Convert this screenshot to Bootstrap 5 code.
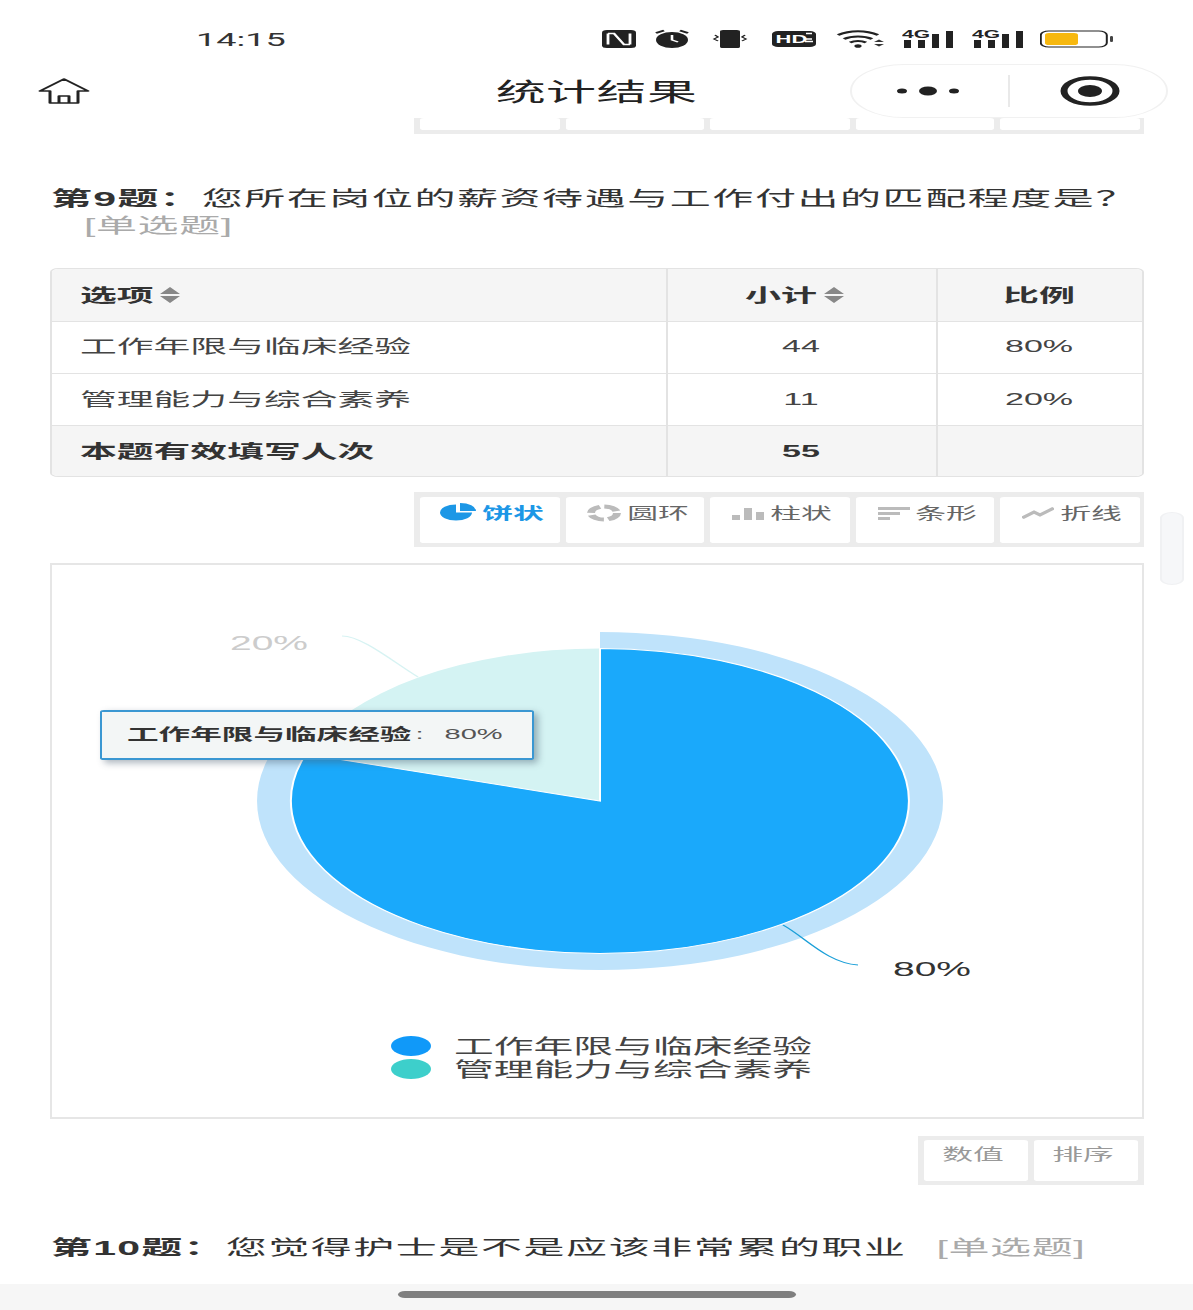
<!doctype html>
<html lang="zh-CN">
<head>
<meta charset="utf-8">
<title>统计结果</title>
<link href="https://cdn.jsdelivr.net/npm/bootstrap@5.3.0/dist/css/bootstrap.min.css" rel="stylesheet">
<style>
html,body{background:#fff;overflow:hidden;height:1310px}
body{font-family:"Liberation Sans","Noto Sans CJK SC",sans-serif;color:#333}
.stage{width:596.5px;height:1310px;transform:scaleX(2);transform-origin:0 0;background:#fff;position:relative}
.statusbar{height:64px;padding:14px 0 0 98px}
.clock{font:400 18px Roboto,sans-serif;color:#333;width:202.5px;padding-top:1px}
.nav-row{height:54px;display:grid;grid-template-columns:1fr auto 1fr;align-items:center}
.page-title{font-size:25px;color:#222;letter-spacing:.2px;padding-top:3px}
.capsule{width:159px;height:54px;border:1px solid #f1f1f1;border-radius:27px;margin-right:12.5px}
.capsule-half{height:100%}
.capsule-left{width:79px;padding-right:1px}
.capsule-right{width:79px;padding-left:3px}
.capsule-sep{width:.5px;height:32px;background:#e9e9e9}
.sheet{height:1166px;overflow:hidden;padding:0 25px}
.stub{height:16px}
.tabbar{background:#ececec;padding:5px 2px 4px 3px;gap:3px}
.tabbar.stub{padding-top:0}
.tab-cell{width:69.5px;height:46px;background:#fff;border-radius:2px;font-size:15.4px;color:#666;padding:6px 0 0 2.5px;gap:3px;line-height:22px}
.stub .tab-cell{height:12px;padding:0}
.tab-cell.on{color:#1c97e6;font-weight:700}
.q-title{font-size:20.5px;line-height:27px;letter-spacing:.78px;color:#333;margin:50.5px 0 29.5px;padding-left:17px;text-indent:-16.5px}
.q-title b{letter-spacing:.6px}
.q-kind{color:#aaa;letter-spacing:.3px}
.q-next{margin:48.5px 0 0;padding-left:.5px;text-indent:0;white-space:nowrap}
.q-next .q-kind{margin-left:2px}
.grid-wrap{border-radius:4px;overflow:hidden;border:1px solid #e3e3e3;height:209px}
.stats{--bs-table-border-color:#e3e3e3;--bs-table-color:#444;font-size:18.4px;table-layout:fixed;height:209px;margin:0;border-style:hidden}
.stats th,.stats td{padding:0 14px;height:52px;vertical-align:middle}
.stats th{padding-top:3px}
.stats th,.stats .sum td{color:#333;font-weight:700}
.stats .shade{--bs-table-bg:#f5f5f5}
.stats .num{font-size:17px;text-align:center}
.stats th.num{font-size:18px}
.stats th.sortable{padding-right:21px}
.sort{margin-left:3px;vertical-align:-2px}
.plot{height:556px;border-style:solid;border-color:#e6e6e6;border-width:2px 1px;margin-top:16px;position:relative}
.plot svg{display:block}
.tip{position:absolute;left:24px;top:145px;width:216.5px;height:50px;background:#f3f6f6;border:solid #3a97d2;border-width:2px 1px;border-radius:2px;box-shadow:2px 3px 5px rgba(70,90,110,.45);padding-left:12.5px;font-size:15.8px;color:#333;font-weight:700}
.tip span{font-weight:400;font-size:14.5px;color:#555;margin-left:2px}
.tip .tip-val{margin-left:2.5px}
.tools{margin-top:17px}
.tools .tabbar{padding:4px 3px;gap:3px}
.tools .tab-cell{width:52px;height:41px;color:#999;padding:4px 2px 0 0}
.chart-num{font-size:19.5px}
.chart-leg{font-size:19.9px;fill:#444}
.scroll-thumb{position:absolute;left:580px;top:512px;width:12px;height:73px;border-radius:6px;background:#f6f7f9;border:1px solid #f0f1f3}
.homebar{height:26px;background:#f6f6f6;padding-top:7px}
.home-ind{width:198.5px;height:7px;border-radius:4px;background:#7f7f7f}
</style>
</head>
<body>
<div class="stage">
  <div class="statusbar d-flex align-items-center">
    <div class="clock">14:15</div>
    <div class="d-flex align-items-center">
      <svg width="17" height="18" viewBox="0 0 17 18"><rect width="17" height="18" rx="2.5" fill="#222"/><path d="M3 3.500v11M14 3.500v11M3 3.500h3l5 11h3" fill="none" stroke="#fff" stroke-width="1.400"/></svg>
      <svg style="margin-left:9.5px" width="18" height="20" viewBox="0 0 18 20"><circle cx="9" cy="11" r="8" fill="#222"/><path d="M9 6v5l3 2" fill="none" stroke="#fff" stroke-width="1.300"/><path d="M1 4l4-2.500M17 4l-4-2.500" stroke="#222" stroke-width="1.600"/></svg>
      <svg style="margin-left:10px" width="20" height="20" viewBox="0 0 20 20"><rect x="5" y="1" width="10" height="18" rx="1.500" fill="#222"/><path d="M2.500 6l1.500 2-2 2 2 2M17.500 6l-1.500 2 2 2-2 2" fill="none" stroke="#222" stroke-width="1"/></svg>
      <svg style="margin-left:11px" width="22" height="18" viewBox="0 0 22 18"><rect width="22" height="16" y="1" rx="3" fill="#222"/><text x="1.800" y="13" font-size="11" font-weight="700" fill="#fff" font-family="Liberation Sans">HD</text><path d="M17 3.500h3M17 9h3M16.500 11.500h4" stroke="#fff" stroke-width="1.400"/></svg>
      <svg style="margin-left:10px" width="24" height="20" viewBox="0 0 24 20"><path d="M1 6c6-5 14-5 20 0M4 10c4-3.500 10-3.500 14 0M7 13.500c2.500-2 5.500-2 8 0" fill="none" stroke="#222" stroke-width="2"/><circle cx="11" cy="17" r="1.800" fill="#222"/><path d="M19 13l2.500-2.500 2.500 2.500zM19 15l2.500 2.500 2.500-2.500z" fill="#333"/></svg>
      <svg style="margin-left:8.5px" width="26" height="20" viewBox="0 0 26 20"><text x="0" y="9" font-size="10.500" font-weight="700" fill="#222" font-family="Liberation Sans">4G</text><rect x="1" y="11" width="3.500" height="8" fill="#222"/><rect x="8" y="11" width="3.500" height="8" fill="#222"/><rect x="15" y="5" width="3.500" height="14" fill="#222"/><rect x="22" y="2" width="3.500" height="17" fill="#222"/></svg>
      <svg style="margin-left:9px" width="26" height="20" viewBox="0 0 26 20"><text x="0" y="9" font-size="10.500" font-weight="700" fill="#222" font-family="Liberation Sans">4G</text><rect x="1" y="11" width="3.500" height="8" fill="#222"/><rect x="8" y="11" width="3.500" height="8" fill="#222"/><rect x="15" y="5" width="3.500" height="14" fill="#222"/><rect x="22" y="2" width="3.500" height="17" fill="#222"/></svg>
      <svg style="margin-left:8.5px" width="37" height="20" viewBox="0 0 37 20"><rect x=".4" y="2" width="33" height="16" rx="4" fill="#fff" stroke="#222" stroke-width="1"/><rect x="2.500" y="4" width="16.500" height="12" rx="2" fill="#f7b80f"/><rect x="35" y="7" width="1.500" height="6" rx=".7" fill="#444"/></svg>
    </div>
  </div>

  <div class="nav-row">
    <svg style="margin-left:19px" width="26" height="28" viewBox="0 0 26 28"><path d="M13 2 1 14h5v12h14V14h5zM10.500 26v-7h5v7" fill="none" stroke="#222" stroke-width="1.500" stroke-linejoin="round"/></svg>
    <div class="page-title">统计结果</div>
    <div class="capsule d-flex align-items-center ms-auto">
      <div class="capsule-half capsule-left d-flex align-items-center justify-content-center">
        <svg width="33" height="12" viewBox="0 0 33 12"><circle cx="3" cy="6" r="2.500" fill="#222"/><circle cx="16" cy="6" r="4.500" fill="#222"/><circle cx="29" cy="6" r="2.500" fill="#222"/></svg>
      </div>
      <div class="capsule-sep"></div>
      <div class="capsule-half capsule-right d-flex align-items-center justify-content-center">
        <svg width="30" height="30" viewBox="0 0 30 30"><circle cx="15" cy="15" r="13" fill="none" stroke="#222" stroke-width="3.500"/><circle cx="15" cy="15" r="6" fill="#222"/></svg>
      </div>
    </div>
  </div>

  <div class="sheet">
    <div class="stub tabbar d-flex ms-auto" style="width:364.500px">
      <div class="tab-cell"></div><div class="tab-cell"></div><div class="tab-cell"></div><div class="tab-cell"></div><div class="tab-cell"></div>
    </div>

    <p class="q-title"><b>第9题：</b>您所在岗位的薪资待遇与工作付出的匹配程度是？ <span class="q-kind">[单选题]</span></p>

    <div class="grid-wrap">
      <table class="table table-bordered stats">
        <colgroup><col style="width:307px"><col style="width:135px"><col></colgroup>
        <thead>
          <tr class="shade">
            <th>选项<svg class="sort" width="10" height="18" viewBox="0 0 10 18"><path d="M5 1 10 8H0zM5 17 0 10h10z" fill="#888"/></svg></th>
            <th class="num sortable">小计<svg class="sort" width="10" height="18" viewBox="0 0 10 18"><path d="M5 1 10 8H0zM5 17 0 10h10z" fill="#888"/></svg></th>
            <th class="num">比例</th>
          </tr>
        </thead>
        <tbody>
          <tr><td>工作年限与临床经验</td><td class="num">44</td><td class="num">80%</td></tr>
          <tr><td>管理能力与综合素养</td><td class="num">11</td><td class="num">20%</td></tr>
          <tr class="shade sum"><td>本题有效填写人次</td><td class="num">55</td><td></td></tr>
        </tbody>
      </table>
    </div>

    <div class="tabbar d-flex ms-auto" style="width:364.500px;margin-top:15px">
      <div class="tab-cell on d-flex justify-content-center">
        <svg width="18" height="20" viewBox="0 0 18 20"><path d="M8 2a8 8 0 1 0 8 8H8z" fill="#1c97e6" transform="translate(0 -.5)"/><path d="M10 0a8 8 0 0 1 8 8h-8z" fill="#1c97e6"/></svg>
        <span>饼状</span>
      </div>
      <div class="tab-cell d-flex justify-content-center">
        <svg width="18" height="20" viewBox="0 0 18 20"><circle cx="9" cy="10" r="6.500" fill="none" stroke="#bbb" stroke-width="4" stroke-dasharray="8 2.200"/></svg>
        <span>圆环</span>
      </div>
      <div class="tab-cell d-flex justify-content-center">
        <svg width="16" height="20" viewBox="0 0 16 20"><rect x="0" y="12" width="4" height="5" fill="#bbb"/><rect x="6" y="5" width="4" height="12" fill="#bbb"/><rect x="12" y="9" width="4" height="8" fill="#bbb"/></svg>
        <span>柱状</span>
      </div>
      <div class="tab-cell d-flex justify-content-center">
        <svg width="16" height="20" viewBox="0 0 16 20"><rect y="4" width="16" height="3" fill="#bbb"/><rect y="9" width="11" height="3" fill="#bbb"/><rect y="14" width="6" height="3" fill="#bbb"/></svg>
        <span>条形</span>
      </div>
      <div class="tab-cell d-flex justify-content-center">
        <svg width="16" height="20" viewBox="0 0 16 20"><path d="M0 15 6 9l3 3 7-7" fill="none" stroke="#bbb" stroke-width="2.500"/></svg>
        <span>折线</span>
      </div>
    </div>

    <div class="plot">
      <svg width="544.500" height="552" viewBox="0 0 544.500 552">
        <path d="M274 236 127 188.900A154.500 152.500 0 0 1 274 83.500z" fill="#d4f3f3"/>
        <path d="M274 67A171.500 169 0 1 1 110.900 183.800L127 188.900A154.500 152.500 0 1 0 274 83.500z" fill="#bfe3fb"/>
        <path d="M274 236V83.500A154.500 152.500 0 1 1 127 188.900z" fill="#1aa9fb" stroke="#fff" stroke-width="1"/>
        <path d="M365.500 360c11 12 22 38 37.500 40" fill="none" stroke="#1a9fd8" stroke-width="1"/>
        <path d="M183 112C170 96 155 71 145 71" fill="none" stroke="#d7f3f3" stroke-width="1"/>
        <text x="89" y="85" class="chart-num" fill="#ccc">20%</text>
        <text x="420.500" y="411" class="chart-num" fill="#333">80%</text>
        <circle cx="179.500" cy="481" r="10" fill="#1099f9"/>
        <circle cx="179.500" cy="504" r="10" fill="#3dcfcb"/>
        <text x="201" y="489" class="chart-leg">工作年限与临床经验</text>
        <text x="201" y="512" class="chart-leg">管理能力与综合素养</text>
      </svg>
      <div class="tip d-flex align-items-center">工作年限与临床经验<span>:</span><span class="tip-val">&nbsp;&nbsp;80%</span></div>
    </div>

    <div class="tools d-flex justify-content-end">
      <div class="tabbar d-flex">
        <div class="tab-cell text-center">数值</div>
        <div class="tab-cell text-center">排序</div>
      </div>
    </div>

    <p class="q-title q-next"><b>第10题：</b>您觉得护士是不是应该非常累的职业 &nbsp;<span class="q-kind">[单选题]</span></p>
  </div>

  <div class="homebar"><div class="home-ind mx-auto"></div></div>
  <div class="scroll-thumb"></div>
</div>
<script src="https://cdn.jsdelivr.net/npm/bootstrap@5.3.0/dist/js/bootstrap.bundle.min.js"></script>
</body>
</html>
